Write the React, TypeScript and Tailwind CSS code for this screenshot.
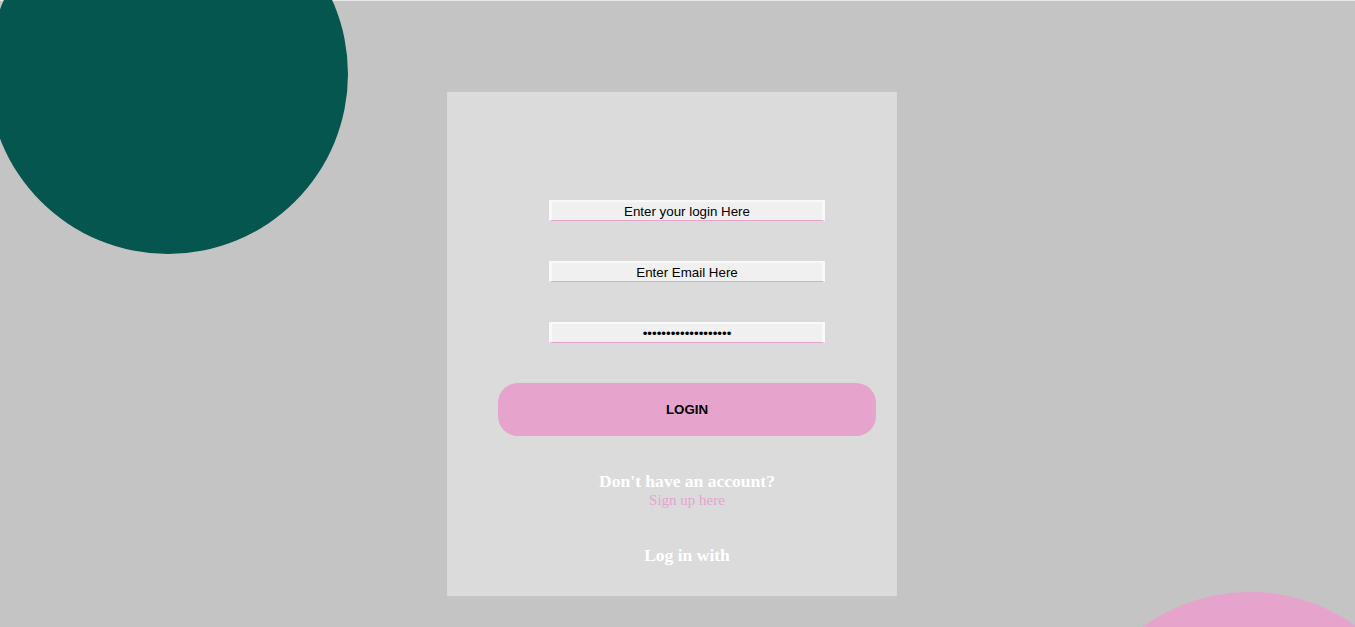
export default function App() {
  const inputCls =
    "w-[276px] h-[21px] box-border bg-[#f0f0f0] border-solid border-t-2 border-x-[3px] border-b border-t-[#f9f9f9] border-x-[#f9f9f9] border-b-[#e6a4cc] text-center text-[13.333px] text-black outline-none font-['Liberation_Sans',Arial,sans-serif]";

  return (
    <div className="relative w-full h-[627px] overflow-hidden bg-[#c4c4c4]">
      <div className="h-px bg-[#e8e8e8]" />
      {/* decorative circles */}
      <div className="absolute left-[-12px] top-[-106px] w-[360px] h-[360px] rounded-full bg-[#05564e]" />
      <div className="absolute left-[1068px] top-[592px] w-[364px] h-[364px] rounded-full bg-[#e6a4cc]" />

      <div className="relative ml-[447px] mt-[91px] w-[450px] h-[504px] bg-[#dbdbdb] pl-[30px] pt-[108px] flex flex-col items-center">
        <input className={inputCls} defaultValue="Enter your login Here" />
        <input className={`${inputCls} mt-[40px]`} defaultValue="Enter Email Here" />
        <input className={`${inputCls} mt-[40px]`} type="password" defaultValue="passwordpassword123" />

        <button className="mt-[40px] w-[378px] h-[53px] rounded-[20px] bg-[#e6a4cc] text-black text-[13.333px] font-bold font-['Liberation_Sans',Arial,sans-serif]">
          LOGIN
        </button>

        <div className="mt-[35px] flex flex-col items-center font-['Liberation_Serif','Times_New_Roman',serif]">
          <h3 className="text-[17.55px] leading-[21px] font-bold text-white">Don't have an account?</h3>
          <a className="-mt-px text-[15px] leading-[18px] text-[#e6a4cc]">Sign up here</a>
          <h3 className="mt-[36px] text-[17.55px] leading-[21px] font-bold text-white">Log in with</h3>
        </div>
      </div>
    </div>
  );
}
